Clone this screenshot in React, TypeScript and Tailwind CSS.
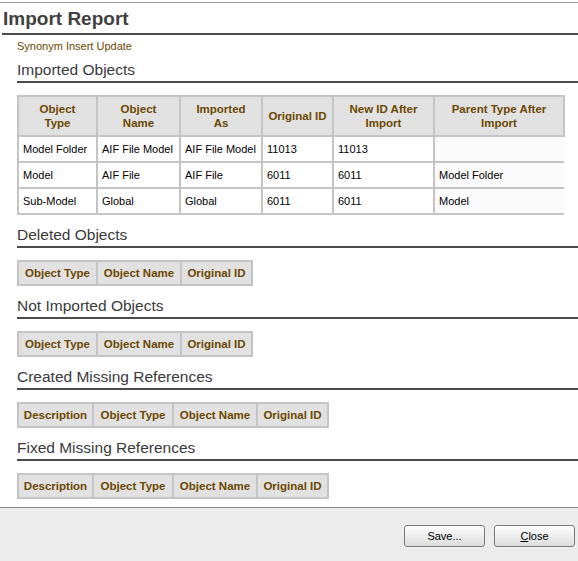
import React from "react";

const hdr = "border-2 border-[#c4c4c4] bg-[#e1e1e1] text-[#6b4700] font-bold text-[11.5px] leading-[14px] px-[4px]";
const cell = "border-2 border-[#c4c4c4] text-[11px] text-black px-[4px] h-[26px] whitespace-nowrap";

type Row = string[];

const imported: Row[] = [
    ["Model Folder", "AIF File Model", "AIF File Model", "11013", "11013", ""],
    ["Model", "AIF File", "AIF File", "6011", "6011", "Model Folder"],
    ["Sub-Model", "Global", "Global", "6011", "6011", "Model"],
];

function Section({ title, children }: { title: string; children: React.ReactNode }) {
    return (
        <div>
            <h2 className="text-[15.5px] leading-[20px] text-[#3a3a3a] border-b-2 border-[#4a4a4a] pb-[1px] pt-[4px]">
                {title}
            </h2>
            <div className="pt-[12px]">{children}</div>
        </div>
    );
}

function HeaderOnly({ cols, widths }: { cols: string[]; widths: number[] }) {
    return (
        <table className="border-collapse">
            <thead>
                <tr>
                    {cols.map((c, i) => (
                        <th key={c} className={hdr + " h-[24px] whitespace-nowrap text-center"} style={{ width: widths[i] }}>
                            {c}
                        </th>
                    ))}
                </tr>
            </thead>
        </table>
    );
}

export default function App() {
    const bigCols: [string, string | null][] = [
        ["Object", "Type"],
        ["Object", "Name"],
        ["Imported", "As"],
        ["Original ID", null],
        ["New ID After", "Import"],
        ["Parent Type After", "Import"],
    ];
    const bigWidths = [79, 83, 82, 71, 101, 130];

    return (
        <div className="w-[578px] h-[561px] flex flex-col overflow-hidden bg-white" style={{ fontFamily: '"Liberation Sans", Arial, sans-serif' }}>
            <div className="flex-1 mt-[2px] border-t border-[#9a9a9a]">
                <h1 className="ml-[2px] pl-[1px] pt-[5px] h-[32px] text-[19px] leading-[22px] font-bold text-[#404040] border-b-2 border-[#4a4a4a]">
                    Import Report
                </h1>
                <div className="pl-[17px]">
                    <p className="text-[11px] leading-[13px] text-[#6b4700] pt-[5px]">Synonym Insert Update</p>

                    <div className="flex flex-col gap-[6px] mt-[3px]">
                        <Section title="Imported Objects">
                            <table className="border-collapse table-fixed">
                                <thead>
                                    <tr>
                                        {bigCols.map(([a, b], i) => (
                                            <th
                                                key={a + i}
                                                className={hdr + " h-[40px] text-center whitespace-nowrap"}
                                                style={{ width: bigWidths[i] }}
                                            >
                                                {a}
                                                {b && <br />}
                                                {b}
                                            </th>
                                        ))}
                                    </tr>
                                </thead>
                                <tbody>
                                    {imported.map((r, ri) => (
                                        <tr key={ri}>
                                            {r.map((v, ci) => (
                                                <td key={ci} className={cell + (ci === 5 ? " bg-[#fafafa] border-r-0" : "")}>
                                                    {v}
                                                </td>
                                            ))}
                                        </tr>
                                    ))}
                                </tbody>
                            </table>
                        </Section>

                        <Section title="Deleted Objects">
                            <HeaderOnly cols={["Object Type", "Object Name", "Original ID"]} widths={[79, 84, 71]} />
                        </Section>

                        <Section title="Not Imported Objects">
                            <HeaderOnly cols={["Object Type", "Object Name", "Original ID"]} widths={[79, 84, 71]} />
                        </Section>

                        <Section title="Created Missing References">
                            <HeaderOnly cols={["Description", "Object Type", "Object Name", "Original ID"]} widths={[75, 80, 84, 71]} />
                        </Section>

                        <Section title="Fixed Missing References">
                            <HeaderOnly cols={["Description", "Object Type", "Object Name", "Original ID"]} widths={[75, 80, 84, 71]} />
                        </Section>
                    </div>
                </div>
            </div>

            <div className="h-[54px] border-t border-[#8a8a8a] bg-[#ececec] flex justify-end items-start pt-[17px] pr-[3px] gap-[9px]">
                <button className="w-[81px] h-[22px] rounded-[3px] border border-[#7a7a7a] bg-gradient-to-b from-white to-[#dcdcdc] text-[11px] text-black">
                    Save...
                </button>
                <button className="w-[81px] h-[22px] rounded-[3px] border border-[#7a7a7a] bg-gradient-to-b from-white to-[#dcdcdc] text-[11px] text-black">
                    <span className="underline">C</span>lose
                </button>
            </div>
        </div>
    );
}
